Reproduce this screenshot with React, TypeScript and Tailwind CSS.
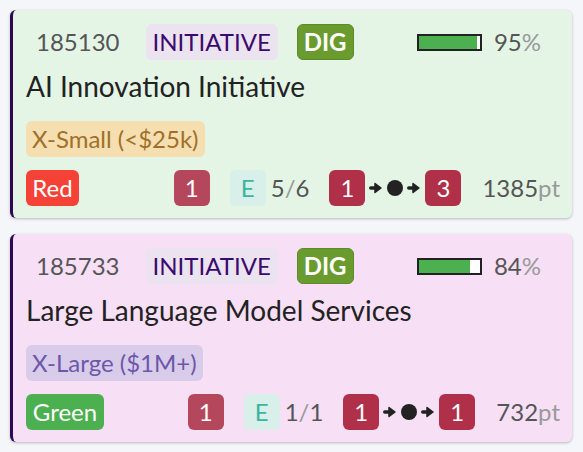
import React from 'react'

interface Item {
  id: string
  title: string
  bg: string
  progress: number
  size: { label: string; cls: string }
  status: { label: string; cls: string }
  risk: number
  effort: string
  done: number
  total: number
  from: number
  to: number
  points: number
}

const items: Item[] = [
  {
    id: '185130',
    title: 'AI Innovation Initiative',
    bg: 'bg-[#e4f5e6]',
    progress: 95,
    size: { label: 'X-Small (<$25k)', cls: 'bg-[#f5deb0] text-[#a0702a]' },
    status: { label: 'Red', cls: 'bg-[#f44336] w-[53px]' },
    risk: 1,
    effort: 'E',
    done: 5,
    total: 6,
    from: 1,
    to: 3,
    points: 1385
  },
  {
    id: '185733',
    title: 'Large Language Model Services',
    bg: 'bg-[#f7dff5]',
    progress: 84,
    size: { label: 'X-Large ($1M+)', cls: 'bg-[#d9cbea] text-[#6b58a8]' },
    status: { label: 'Green', cls: 'bg-[#4caf50] w-[78px]' },
    risk: 1,
    effort: 'E',
    done: 1,
    total: 1,
    from: 1,
    to: 1,
    points: 732
  }
]

function Arrow() {
  return (
    <svg width="13" height="12" viewBox="0 0 13 12" className="shrink-0">
      <path d="M1.8 6h5" stroke="#222" strokeWidth="3.6" strokeLinecap="round" />
      <path d="M6 1.5L12 6L6 10.5z" fill="#222" stroke="#222" strokeWidth="1.5" strokeLinejoin="round" />
    </svg>
  )
}

function Card({ item }: { item: Item }) {
  return (
    <div
      className={`${item.bg} rounded-md border-l-[3px] border-[#2e0854] shadow-[0_1px_3px_rgba(0,0,0,0.25)] pl-[13px] pr-[12px] pt-[14px] pb-[14px] h-[208px]`}
    >
      {/* header */}
      <div className="flex items-center h-9 text-[24px]">
        <span className="px-[10px] text-[#555]">{item.id}</span>
        <span className="ml-[16px] h-9 px-[7px] flex items-center rounded-md bg-[#ebe3f0] text-[#3b0a6e]">
          INITIATIVE
        </span>
        <span className="ml-[19px] h-9 px-[6px] flex items-center rounded-md bg-[#6a9b2e] border border-[#5e8a28] text-white font-bold">
          DIG
        </span>
        <div className="ml-auto mr-[19px] flex items-center">
          <div className="w-[65px] h-[17px] border-2 border-[#222] bg-white">
            <div className="h-full bg-[#4caf50]" style={{ width: `${item.progress}%` }} />
          </div>
          <span className="ml-[12px] text-[#555]">
            {item.progress}
            <span className="text-[#999]">%</span>
          </span>
        </div>
      </div>

      <div className="mt-[9px] h-[34px] flex items-center text-[28px] text-[#222]">{item.title}</div>

      <div className="mt-[18px] flex">
        <span className={`h-9 px-[6px] flex items-center rounded-md text-[24px] ${item.size.cls}`}>
          {item.size.label}
        </span>
      </div>

      <div className="mt-[13px] flex items-center h-9 text-[24px]">
        <span className={`h-9 flex items-center justify-center rounded-md text-white ${item.status.cls}`}>
          {item.status.label}
        </span>
        <div className="ml-auto flex items-center">
          <span className="w-9 h-9 flex items-center justify-center rounded-md bg-[#b5475d] text-white">
            {item.risk}
          </span>
          <span className="ml-[20px] w-9 h-9 flex items-center justify-center rounded-md bg-[#d8efea] text-[#3ab5a0]">
            {item.effort}
          </span>
          <span className="ml-[5px] text-[#555]">
            {item.done}
            <span className="text-[#999]">/</span>
            {item.total}
          </span>
          <span className="ml-[20px] w-9 h-9 flex items-center justify-center rounded-md bg-[#b0304a] text-white">
            {item.from}
          </span>
          <span className="ml-[4px] mr-[5px] flex items-center">
            <Arrow />
            <span className="ml-[5px] w-4 h-4 rounded-full bg-[#222]" />
            <span className="ml-[4px] flex">
              <Arrow />
            </span>
          </span>
          <span className="w-9 h-9 flex items-center justify-center rounded-md bg-[#b0304a] text-white">
            {item.to}
          </span>
          <span className="ml-[21px] text-[#555]">
            {item.points}
            <span className="text-[#999]">pt</span>
          </span>
        </div>
      </div>
    </div>
  )
}

export default function App() {
  return (
    <div className="min-h-[452px] w-[583px] bg-[#f5f6fa] pt-[10px] pl-[10px] pr-[11px] flex flex-col gap-[16px] font-['Lato',sans-serif]">
      {items.map((item) => (
        <Card key={item.id} item={item} />
      ))}
    </div>
  )
}
